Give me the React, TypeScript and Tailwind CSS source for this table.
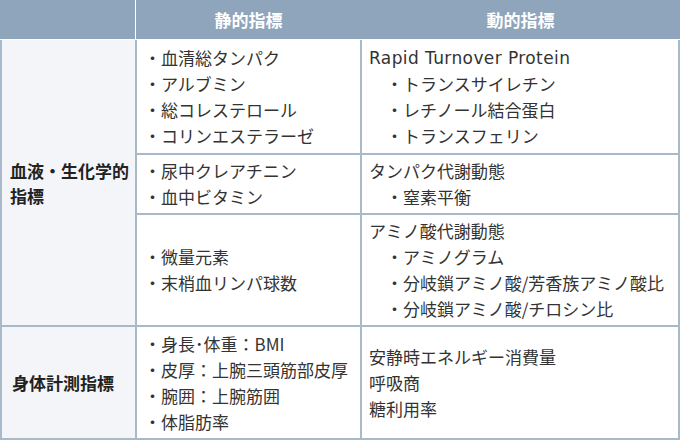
const rows1 = ["・血清総タンパク", "・アルブミン", "・総コレステロール", "・コリンエステラーゼ"]

function Lines({ items }: { items: React.ReactNode[] }) {
  return (
    <div className="flex flex-col justify-center bg-white pl-[7px] leading-[26px]">
      {items.map((t, i) => (
        <div key={i} className="whitespace-nowrap">
          {t}
        </div>
      ))}
    </div>
  )
}

export default function App() {
  return (
    <div className="w-[680px] h-[440px] bg-white text-[17px] text-[#333] font-['Noto_Sans_CJK_JP',sans-serif]">
      <div className="flex h-[39px] bg-[#8fa5bb] font-bold text-white">
        <div className="w-[136px] border-r border-white" />
        <div className="flex w-[225px] items-center justify-center">静的指標</div>
        <div className="flex flex-1 items-center justify-center">動的指標</div>
      </div>
      <div className="h-px bg-white" />
      <div className="grid grid-cols-[133px_223px_316px] grid-rows-[113px_58px_110px_111px] gap-[2px] bg-[#a8b9ca] px-[2px] pb-[2px]">
        <div className="row-span-3 flex items-center bg-[#f3f5f9] pl-[8px] font-bold leading-[25px] text-[#222]">
          <div className="whitespace-nowrap">
            血液・生化学的
            <br />
            指標
          </div>
        </div>
        <Lines items={rows1} />
        <Lines
          items={[
            <span className="font-['DejaVu_Sans',sans-serif] tracking-[0.4px]">Rapid Turnover Protein</span>,
            "　・トランスサイレチン",
            "　・レチノール結合蛋白",
            "　・トランスフェリン",
          ]}
        />
        <Lines items={["・尿中クレアチニン", "・血中ビタミン"]} />
        <Lines items={["タンパク代謝動態", "　・窒素平衡"]} />
        <Lines items={["・微量元素", "・末梢血リンパ球数"]} />
        <Lines
          items={[
            "アミノ酸代謝動態",
            "　・アミノグラム",
            "　・分岐鎖アミノ酸/芳香族アミノ酸比",
            "　・分岐鎖アミノ酸/チロシン比",
          ]}
        />
        <div className="flex items-center bg-[#f3f5f9] pl-[10px] font-bold text-[#222]">身体計測指標</div>
        <Lines items={["・身長･体重：BMI", "・皮厚：上腕三頭筋部皮厚", "・腕囲：上腕筋囲", "・体脂肪率"]} />
        <Lines items={["安静時エネルギー消費量", "呼吸商", "糖利用率"]} />
      </div>
    </div>
  )
}
